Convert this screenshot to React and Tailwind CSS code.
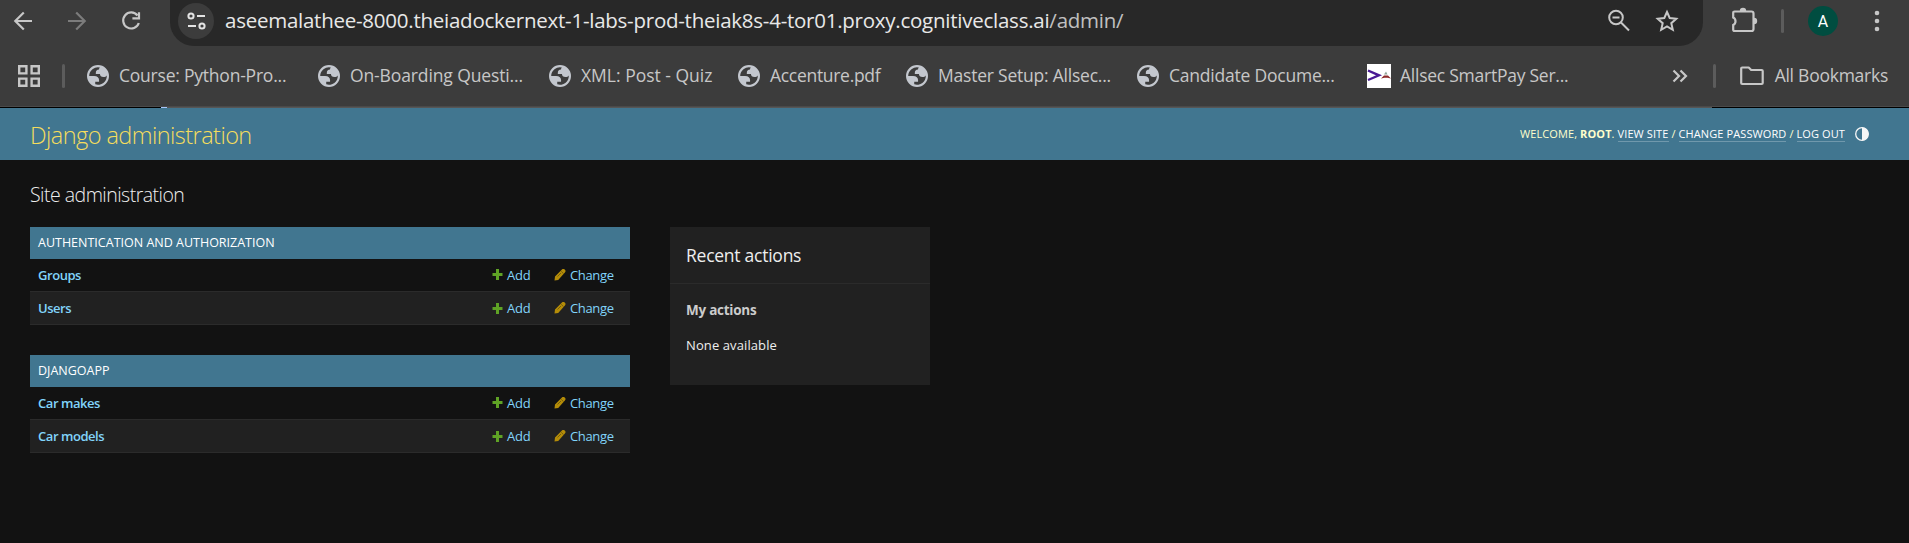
const Globe = () => (
  <svg width="22" height="22" viewBox="2 2 20 20" className="shrink-0">
    <path fillRule="evenodd" fill="#c3c7ce" d="M12 2a10 10 0 1 1 0 20a10 10 0 0 1 0-20zM4 12h4.400c3.407.022 4.922 1.730 4.543 5.127H9.488v2.470a8.004 8.004 0 0 0 10.498-8.083C19.327 12.504 18.332 13 17 13c-2.137 0-3.206-.916-3.206-2.750h-3.748c-.274-2.728.683-4.092 2.870-4.092 0-.975.327-1.597.811-1.970A8.004 8.004 0 0 0 4 12z" />
  </svg>
);

const bookmarks = [
  { label: "Course: Python-Pro...", box: "w-[231px]", text: "tracking-[-0.22px]" },
  { label: "On-Boarding Questi...", box: "w-[231px]", text: "tracking-[-0.12px]" },
  { label: "XML: Post - Quiz", box: "w-[189px]", text: "tracking-[0px]" },
  { label: "Accenture.pdf", box: "w-[168px]", text: "tracking-[-0.3px]" },
  { label: "Master Setup: Allsec...", box: "w-[231px]", text: "tracking-[-0.22px]" },
  { label: "Candidate Docume...", box: "w-[230px]", text: "tracking-[-0.22px]" },
];

const Divider = () => <div className="h-6 w-[3px] shrink-0 rounded-full bg-[#5c5c5c]" />;

function Toolbar() {
  return (
    <div className="flex h-[46px] items-start">
      <svg width="170" height="42" viewBox="0 0 170 42" fill="none" strokeWidth="2.2" className="shrink-0">
        <path d="M32 21H15.5M23.8 12.5L15.3 21l8.500 8.500" stroke="#c7c7c7" />
        <path d="M68 21h16.500M76.200 12.500L84.700 21l-8.500 8.500" stroke="#7c7c7c" />
        <path d="M137.500 15.500A8 8 0 1 0 138.800 23M139 12.200v6.200h-6.600" stroke="#c7c7c7" />
      </svg>
      <div className="flex h-[46px] w-[1533px] shrink-0 items-start rounded-b-[24px] bg-[#282828] pl-2">
        <div className="mt-[3px] flex size-9 items-center justify-center rounded-full bg-[#3c3c3c]">
          <svg width="20" height="20" viewBox="0 0 20 20" fill="none" stroke="#e3e3e3" strokeWidth="2">
            <circle cx="5" cy="5" r="2.600" />
            <path d="M11 5h8M2 15h8" />
            <circle cx="16" cy="15" r="2.600" />
          </svg>
        </div>
        <div className="ml-[11px] mt-1 whitespace-nowrap text-[20.5px] leading-8 tracking-[-0.25px] text-[#e8e8e8]">
          aseemalathee-8000.theiadockernext-1-labs-prod-theiak8s-4-tor01.proxy.cognitiveclass.ai<span className="text-[#c0c0c0]">/admin/</span>
        </div>
        <svg width="76" height="42" viewBox="1606 0 76 42" fill="none" stroke="#c7c7c7" strokeWidth="2" className="ml-auto mr-[21px] shrink-0">
          <circle cx="1616" cy="17.500" r="6.800" />
          <path d="M1612.500 17.500h7M1621 22.500l8 8" />
          <path d="M1667 12l2.700 6 6.600.7-5 4.500 1.500 6.600-5.800-3.400-5.800 3.400 1.500-6.600-5-4.500 6.600-.7z" />
        </svg>
      </div>
      <svg width="206" height="42" viewBox="1703 0 206 42" fill="none" className="shrink-0">
        <path d="M1734.500 11.500h17a2 2 0 0 1 2 2v15.500a2 2 0 0 1-2 2h-17a1.300 1.300 0 0 1-1.300-1.300v-4.700a4.200 4.200 0 0 0 0-7.500v-4.700a1.300 1.300 0 0 1 1.300-1.300z" stroke="#c7c7c7" strokeWidth="2.200" />
        <path d="M1739.800 11a3.200 3.200 0 0 1 6.400 0zM1754 17.800a3.200 3.200 0 0 1 0 6.400z" fill="#c7c7c7" />
        <rect x="1781" y="9" width="3" height="24" rx="1.500" fill="#5c5c5c" />
        <circle cx="1823" cy="21" r="15" fill="#004d40" />
        <text x="1823" y="27" textAnchor="middle" fontSize="16" fill="#fff" fontFamily="Roboto, sans-serif">A</text>
        <g fill="#c7c7c7"><circle cx="1877" cy="13" r="2.300" /><circle cx="1877" cy="21" r="2.300" /><circle cx="1877" cy="29" r="2.300" /></g>
      </svg>
    </div>
  );
}

function BookmarksBar() {
  return (
    <div className="flex h-[60px] items-center whitespace-nowrap pl-[18px] text-[17.5px] tracking-[-0.22px] text-[#c7c7c7]">
      <svg width="22" height="22" viewBox="0 0 22 22" fill="none" stroke="#c7c7c7" strokeWidth="2.400" className="mr-[22px] shrink-0">
        <path d="M1.200 1.200h7.200v7.200h-7.200zM13.600 1.200h7.200v7.200h-7.200zM1.200 13.600h7.200v7.200h-7.200zM13.600 13.600h7.200v7.200h-7.200z" />
      </svg>
      <Divider />
      <div className="w-[22px] shrink-0" />
      {bookmarks.map((b) => (
        <div key={b.label} className={`flex shrink-0 items-center gap-2.5 ${b.box}`}>
          <Globe />
          <span className={`-mt-px ${b.text}`}>{b.label}</span>
        </div>
      ))}
      <svg width="24" height="24" viewBox="0 0 24 24" className="shrink-0">
        <path d="M0 0h24v24H0z" fill="#fff" />
        <path d="M1 6.500l11 4.800L1 16" fill="none" stroke="#4a1a94" strokeWidth="2.400" />
        <path d="M14 14.500l3-3h4l3 3-3.500-.8h-3z" fill="#8d2a2a" />
        <path d="M17 10.500l2-3 1.500 3z" fill="#8fa396" />
      </svg>
      <span className="-mt-px ml-[9px] tracking-[-0.25px]">Allsec SmartPay Ser...</span>
      <svg width="16" height="14" viewBox="0 0 16 14" fill="none" stroke="#c7c7c7" strokeWidth="2.200" className="ml-auto mr-[25px] shrink-0">
        <path d="M1.500 1.500L7 7l-5.500 5.500M8.500 1.500L14 7l-5.500 5.500" />
      </svg>
      <Divider />
      <svg width="24" height="20" viewBox="0 0 24 20" fill="none" stroke="#c7c7c7" strokeWidth="2.200" strokeLinejoin="round" className="ml-6 mr-[11px] shrink-0">
        <path d="M1.200 2.500a1 1 0 0 1 1-1h6.500l2.500 2.500h10.500a1 1 0 0 1 1 1v12a1 1 0 0 1-1 1h-19.500a1 1 0 0 1-1-1z" />
      </svg>
      <span className="-mt-px mr-[21px] tracking-[-0.25px]">All Bookmarks</span>
    </div>
  );
}

function PageEdge() {
  return (
    <div className="flex h-0.5 border-t border-[#4a4a4a]">
      <div className="w-[161px] bg-black" />
      <div className="w-1.5 bg-[#a8c7fa]" />
      <div className="w-[1545px] bg-[#565656]" />
      <div className="flex-1 bg-black" />
    </div>
  );
}

function Header() {
  return (
    <header className="flex h-[52px] items-center bg-[#417690] pl-[30px] pr-10">
      <h1 className="pt-px text-[23.5px] font-light leading-8 tracking-[-0.55px] text-[#f5dd5d]">Django administration</h1>
      <div className="ml-auto flex items-center whitespace-pre text-[11px] leading-[14px] tracking-[0.1px] text-[#ffffcc]">
        <span>WELCOME, <b>ROOT</b>. </span>
        <a className="border-b border-white/25 text-white">VIEW SITE</a>
        <span> / </span>
        <a className="border-b border-white/25 text-white">CHANGE PASSWORD</a>
        <span> / </span>
        <a className="border-b border-white/25 text-white">LOG OUT</a>
        <svg width="14" height="14" viewBox="0 0 14 14" className="ml-2.5 shrink-0">
          <circle cx="7" cy="7" r="6.300" fill="none" stroke="#f7f7f7" strokeWidth="1.300" />
          <path d="M7 .5a6.500 6.500 0 0 1 0 13z" fill="#f7f7f7" />
        </svg>
      </div>
    </header>
  );
}

const Plus = () => (
  <svg width="11" height="11" viewBox="0 0 10 11" className="mb-0.5 mr-1">
    <path d="M3.500 0h3v4H10v3H6.500v4h-3V7H0V4h3.500z" fill="#5fa225" />
  </svg>
);

const Pencil = () => (
  <svg width="12" height="12" viewBox="0 0 11 12" className="mb-0.5 mr-1 shrink-0">
    <path d="M0 11.600l.5-4L7.200.700a2 2 0 0 1 3.200 2.800L3.700 10.900z" fill="#b48c08" />
    <path d="M6.700 2.300l2.300 2.300M3 7.500l3.500-3.500" stroke="#5c4a10" strokeWidth=".7" />
  </svg>
);

function Row({ name, last }) {
  return (
    <div className={`flex items-center border-[#2b2b2b] pl-2 pr-[14px] text-[13px] text-[#81d4fa] ${last ? "h-[34px] border-y bg-[#212121] pt-0.5" : "h-8 pt-px"}`}>
      <a className="flex-1 font-semibold tracking-[-0.45px]">{name}</a>
      <a className="flex w-[62px] items-center tracking-[-0.2px]"><Plus />Add</a>
      <a className="flex w-[62px] items-center whitespace-nowrap tracking-[-0.35px]"><Pencil />Change</a>
    </div>
  );
}

function Module({ title, rows }) {
  return (
    <section className="mb-[30px]">
      <h2 className="flex h-8 items-center bg-[#417690] pl-2 pt-px text-[12.5px] text-white">{title}</h2>
      {rows.map((r, i) => <Row key={r} name={r} last={i === 1} />)}
    </section>
  );
}

export default function App() {
  return (
    <div className="h-[543px] w-[1909px] overflow-hidden bg-[#121212] font-['Open_Sans',sans-serif] text-[#eeeeee]">
      <div className="bg-[#3c3c3c]">
        <Toolbar />
        <BookmarksBar />
        <PageEdge />
      </div>
      <Header />
      <main className="px-[30px] pt-5">
        <h1 className="mb-[17px] text-[19.5px] font-light leading-[30px] tracking-[-0.52px]">Site administration</h1>
        <div className="flex items-start gap-10">
          <div className="w-[600px]">
            <Module title="AUTHENTICATION AND AUTHORIZATION" rows={["Groups", "Users"]} />
            <Module title="DJANGOAPP" rows={["Car makes", "Car models"]} />
          </div>
          <aside className="h-[158px] w-[260px] bg-[#212121]">
            <h2 className="flex h-[57px] items-center border-b border-[#2b2b2b] pl-4 text-[17.5px] tracking-[-0.25px]">Recent actions</h2>
            <h3 className="mt-4 pl-4 text-[13.5px] font-bold leading-5 tracking-[-0.25px] text-[#cccccc]">My actions</h3>
            <p className="mt-[15px] pl-4 text-[13px] leading-5 tracking-[0.1px]">None available</p>
          </aside>
        </div>
      </main>
    </div>
  );
}
